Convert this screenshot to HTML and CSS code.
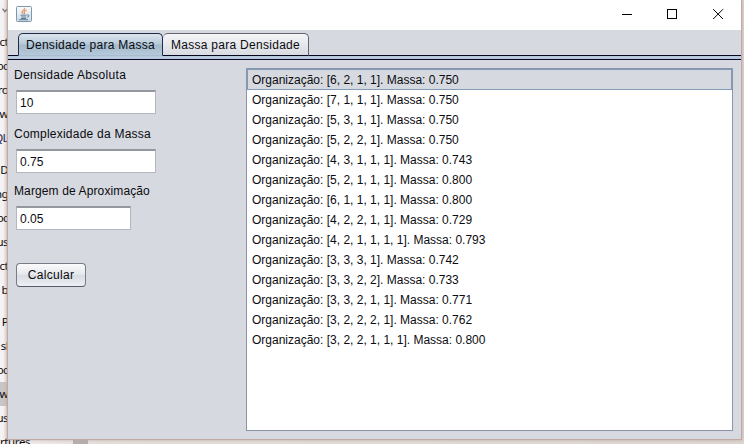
FILE: index.html
```html
<!DOCTYPE html>
<html lang="pt-BR">
<head>
<meta charset="utf-8">
<title>Densidade para Massa</title>
<link rel="stylesheet" href="styles.css">
</head>
<body>
<div class="desktop">
  <aside class="behind">
    <svg class="chevron" width="7" height="5" viewBox="0 0 7 5"><path d="M2.5 0.7L4.8 3.7L7 1.2" fill="none" stroke="#777" stroke-width="1.3"/></svg>
    <div class="item">ct</div><div class="item">oc</div><div class="item">ro</div><div class="item">ew</div><div class="item navy">QL</div>
    <div class="item gap">D</div><div class="item">ng</div><div class="item">oc</div><div class="item">us</div><div class="item">ct</div><div class="item">b</div>
    <div class="item gap">P</div><div class="item">sl</div><div class="item">oc</div><div class="item selected">ow</div><div class="item">us</div><div class="item last">rtures</div>
  </aside>
  <main class="window">
    <header class="titlebar">
      <svg class="java" width="16" height="16" viewBox="0 0 16 16">
        <defs><linearGradient id="tile" x2="0" y2="1"><stop stop-color="#fbfcfd"/><stop offset="1" stop-color="#cbdbe6"/></linearGradient></defs>
        <rect x=".5" y=".5" width="15" height="15" rx="1" fill="url(#tile)" stroke="#7d98ac"/>
        <path d="M8.6 2C9.5 4 5.6 4.6 6 6.2C6.2 7 7 7.4 7.2 8M10.7 4C7.5 5 8 6 8.5 6.7C8.9 7.3 8.2 7.8 8 8" fill="none" stroke="#e28b4c" stroke-width="1.1"/>
        <path d="M4.5 9.2H10.5M5.2 11H10M5 12.5H10M3 13.7H12M10.8 9C13.8 8.2 13.5 11 10.8 11.3" fill="none" stroke="#526f8e" stroke-width=".9"/>
      </svg>
      <svg class="controls" width="103" height="11" viewBox="0 0 103 11" fill="none" stroke="#000">
        <path d="M0 5.5H10" shape-rendering="crispEdges"/><rect x="45.5" y=".5" width="9" height="9" shape-rendering="crispEdges"/><path d="M91.2 .2L101 10M101 .2L91.2 10"/>
      </svg>
    </header>
    <nav class="tabs"><div class="tab active"><span>Densidade para Massa</span></div><div class="tab"><span>Massa para Densidade</span></div></nav>
    <div class="divider"></div>
    <section class="content">
      <form class="form">
        <label>Densidade Absoluta</label><div class="field first">10</div>
        <label class="complexity">Complexidade da Massa</label><div class="field">0.75</div>
        <label class="margin">Margem de Aproximação</label><div class="field short">0.05</div>
        <button type="button" class="button">Calcular</button>
      </form>
      <ul class="list">
        <li class="focused">Organização: [6, 2, 1, 1]. Massa: 0.750</li>
        <li>Organização: [7, 1, 1, 1]. Massa: 0.750</li>
        <li>Organização: [5, 3, 1, 1]. Massa: 0.750</li>
        <li>Organização: [5, 2, 2, 1]. Massa: 0.750</li>
        <li>Organização: [4, 3, 1, 1, 1]. Massa: 0.743</li>
        <li>Organização: [5, 2, 1, 1, 1]. Massa: 0.800</li>
        <li>Organização: [6, 1, 1, 1, 1]. Massa: 0.800</li>
        <li>Organização: [4, 2, 2, 1, 1]. Massa: 0.729</li>
        <li>Organização: [4, 2, 1, 1, 1, 1]. Massa: 0.793</li>
        <li>Organização: [3, 3, 3, 1]. Massa: 0.742</li>
        <li>Organização: [3, 3, 2, 2]. Massa: 0.733</li>
        <li>Organização: [3, 3, 2, 1, 1]. Massa: 0.771</li>
        <li>Organização: [3, 2, 2, 2, 1]. Massa: 0.762</li>
        <li>Organização: [3, 2, 2, 1, 1, 1]. Massa: 0.800</li>
      </ul>
    </section>
  </main>
</div>
</body>
</html>
```
FILE: styles.css
```css
* { box-sizing: border-box; }
body { margin: 0; font: 12px/16px "Liberation Sans", Arial, sans-serif; color: #0b0b10; }
.desktop { position: relative; width: 744px; height: 444px; overflow: hidden; background: linear-gradient(90deg, #f3f1f0 0, #e4dedb 100px, #ddd5d1 740px); }
.desktop::after { content: ""; position: absolute; left: 73px; top: 440px; width: 15px; height: 4px; background: #b5adab; }
.behind { width: 8px; height: 444px; font-family: "Noto Sans", sans-serif; background: linear-gradient(90deg, #f4f3f3 3px, #dfd5d2); display: flex; flex-direction: column; }
.chevron { flex: none; margin: 8px 0 17px; }
.item { flex: none; height: 24px; line-height: 23px; font-size: 11.5px; letter-spacing: -.6px; display: flex; justify-content: flex-end; overflow: hidden; }
.gap { margin-top: 8px; }
.navy { color: #202050; }
.selected { background: #c9c5c4; }
.last { justify-content: flex-start; overflow: visible; letter-spacing: -.4px; }
.window { position: absolute; left: 7px; top: 0; width: 735px; height: 440px; background: #d6d9df; border: solid #c0a9a2; border-width: 0 1px 1px; box-shadow: 0 0 3px #a98e8699; }
.titlebar { height: 30px; background: #fff; display: flex; justify-content: space-between; padding: 6px 16px 0 8px; }
.controls { margin-top: 3px; }
.tabs { height: 26px; padding: 3px 0 0 10px; display: flex; border-bottom: 1px solid #060620; }
.tab { height: 23px; margin-bottom: -1px; padding: 3px 7px 0; width: 146px; border: 1px solid #62656e; border-bottom-color: #060620; border-radius: 5px 5px 0 0; background: linear-gradient(#f4f5f7, #d8dbe0); white-space: nowrap; }
.tab.active { width: 145px; border-color: #202b4b; border-bottom-color: #a8bdd2; background: linear-gradient(#dce5ed, #b8cbdb 45%, #a4bacd 55%, #b6c9da); }
.tab + .tab { border-left: 0; padding-left: 8px; }
.tab span { letter-spacing: .28px; }
.divider { height: 4px; background: #b7c9dc; border-bottom: 1px solid #060620; }
.content { display: flex; padding: 8px 8px 0 6px; }
.form { width: 232px; display: flex; flex-direction: column; align-items: flex-start; }
label { height: 16px; margin-top: -1px; letter-spacing: .3px; }
.complexity { letter-spacing: .23px; }
.margin { letter-spacing: .12px; }
.field { width: 140px; height: 24px; margin: 7px 0 11px 2px; padding: 3px; background: #fff; border: 1px solid #b4b8be; border-top: 2px solid #94979d; }
.field.first { margin-bottom: 13px; }
.field.short { width: 115px; }
.button { width: 70px; height: 24px; margin: 22px 0 0 2px; padding: 0; font: inherit; letter-spacing: .3px; color: inherit; border: 1px solid #777c88; border-bottom-color: #555b68; border-radius: 4px; background: linear-gradient(#fbfbfc, #e4e7eb 50%, #d8dce2 51%, #edf0f4); }
.list { width: 487px; height: 363px; margin: 0; padding: 0; list-style: none; background: #fff; border: 1px solid #8b95a7; }
.list li { height: 20px; padding: 2px 5px; white-space: nowrap; }
.list .focused { height: 21px; padding: 2px 4px; border: 1px solid #7f9db9; background: #d6d9df; }
```
